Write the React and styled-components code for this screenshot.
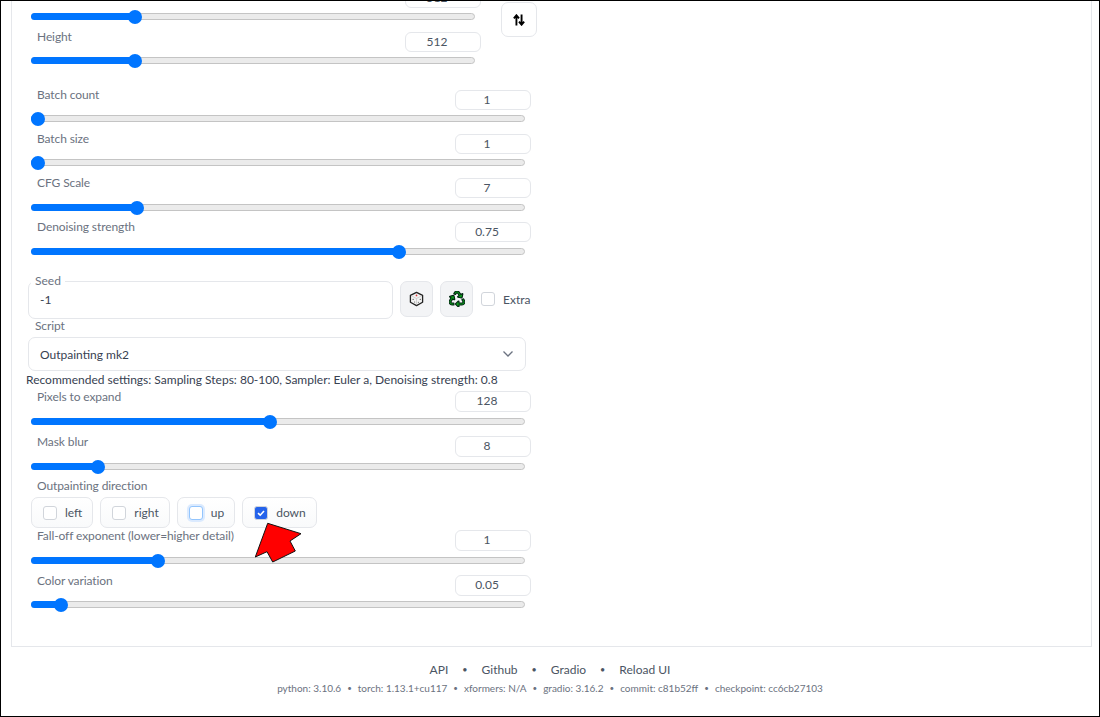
import React from 'react';
import styled, { createGlobalStyle } from 'styled-components';
import { FaRecycle } from 'react-icons/fa';

const GlobalStyle = createGlobalStyle`
  html, body {
    margin: 0;
    padding: 0;
    background: white;
  }
  body {
    font-family: Lato, "Noto Sans", "Liberation Sans", sans-serif;
  }
`;

const Frame = styled.div`
  box-sizing: border-box;
  width: 1100px;
  height: 717px;
  border: 1px solid black;
  overflow: hidden;
  position: relative;
  background: white;
`;

const Panel = styled.main`
  box-sizing: border-box;
  display: flow-root;
  height: 647px;
  margin: -1px 7px 0 10px;
  border: 1px solid #e5e7eb;
  border-top: 0;
  padding-left: 19px;
`;

const Column = styled.div`
  width: 494px;
`;

const SizeGroup = styled.div`
  display: flex;
  gap: 26px;
  margin-top: -12px;
`;

const SizeSliders = styled.div`
  width: 444px;
  flex: none;
`;

const SwapButton = styled.button`
  box-sizing: border-box;
  flex: none;
  width: 36px;
  height: 35px;
  margin-top: 14px;
  padding: 0;
  display: flex;
  align-items: center;
  justify-content: center;
  background: white;
  border: 1px solid #e5e7eb;
  border-radius: 7px;
`;

const SliderBlock = styled.div`
  margin-top: ${(p) => p.$top || 0}px;
`;

const SliderHead = styled.div`
  display: flex;
  justify-content: space-between;
  height: ${(p) => (p.$tall ? 21 : 20)}px;
`;

const SliderLabel = styled.span`
  font-size: 12px;
  letter-spacing: -0.1px;
  line-height: ${(p) => (p.$tall ? 12 : 10)}px;
  color: #6b7280;
  padding-left: 6px;
`;

const NumberBox = styled.div`
  box-sizing: border-box;
  width: 76px;
  height: 100%;
  margin-right: -6px;
  padding-right: 12px;
  border: 1px solid #e5e7eb;
  border-radius: 6px;
  font-size: 12px;
  line-height: 18px;
  text-align: center;
  color: #4b5563;
`;

const Track = styled.div`
  box-sizing: border-box;
  position: relative;
  height: 7px;
  margin-top: ${(p) => p.$gap}px;
  background: #ebebeb;
  border: 1px solid #c4c4c4;
  border-radius: 4px;
`;

const TrackFill = styled.div`
  position: absolute;
  left: -1px;
  top: -1px;
  bottom: -1px;
  background: #0075ff;
  border-radius: 4px;
`;

const Thumb = styled.div`
  position: absolute;
  top: -3.5px;
  right: -7px;
  width: 14px;
  height: 14px;
  border-radius: 50%;
  background: #0075ff;
`;

const SeedRow = styled.div`
  display: flex;
  align-items: flex-start;
  margin-top: 26px;
  margin-left: -3px;
`;

const SeedBox = styled.div`
  position: relative;
  box-sizing: border-box;
  flex: none;
  width: 365px;
  height: 38px;
  padding-left: 11px;
  border: 1px solid #e5e7eb;
  border-radius: 7px;
  font-size: 12px;
  line-height: 36px;
  color: #374151;
`;

const SeedLegend = styled.span`
  position: absolute;
  top: -8px;
  left: 2px;
  padding: 0 4px;
  background: white;
  font-size: 12px;
  line-height: 14px;
  color: #6b7280;
`;

const ToolButton = styled.button`
  box-sizing: border-box;
  flex: none;
  width: 33px;
  height: 36px;
  margin-left: 7px;
  padding: 0;
  display: flex;
  align-items: center;
  justify-content: center;
  background: #f3f4f6;
  border: 1px solid #e5e7eb;
  border-radius: 7px;
`;

const ExtraToggle = styled.label`
  display: flex;
  flex: none;
  align-items: center;
  gap: 8px;
  height: 36px;
  margin-left: 8px;
  font-size: 12px;
  color: #4b5563;
`;

const Box = styled.span`
  box-sizing: border-box;
  flex: none;
  width: 14px;
  height: 14px;
  display: flex;
  align-items: center;
  justify-content: center;
  border: 1px solid ${(p) => (p.$focused ? '#93c5fd' : '#d1d5db')};
  border-radius: 3px;
  background: ${(p) => (p.$checked ? '#2563eb' : 'white')};
  box-shadow: ${(p) => (p.$focused ? '0 0 0 2px #dbeafe' : 'none')};
`;

const FieldLabel = styled.div`
  margin-left: ${(p) => p.$left || 0}px;
  margin-top: ${(p) => p.$top || 0}px;
  font-size: 12px;
  letter-spacing: -0.1px;
  line-height: 14px;
  color: #6b7280;
`;

const SelectBox = styled.div`
  box-sizing: border-box;
  display: flex;
  align-items: center;
  justify-content: space-between;
  width: 498px;
  height: 34px;
  margin: 4px 0 0 -3px;
  padding: 0 11px 0 11px;
  border: 1px solid #e5e7eb;
  border-radius: 7px;
  font-size: 12px;
  color: #374151;
`;

const Hint = styled.div`
  margin: 1px 0 0 -5px;
  font-size: 12px;
  line-height: 16px;
  white-space: nowrap;
  color: #374151;
`;

const ChipRow = styled.div`
  display: flex;
  gap: 7px;
  margin-top: 4px;
`;

const Chip = styled.label`
  box-sizing: border-box;
  display: flex;
  align-items: center;
  gap: 8px;
  height: 31px;
  padding: 0 10px 0 11px;
  border: 1px solid #e5e7eb;
  border-radius: 7px;
  background: linear-gradient(to bottom, #ffffff, #f9fafb);
  font-size: 12px;
  color: #4b5563;
`;

const Arrow = styled.svg`
  position: absolute;
  left: 250px;
  top: 517px;
`;

const Footer = styled.footer`
  text-align: center;
  padding-top: 15px;
`;

const FooterLinks = styled.div`
  display: flex;
  justify-content: center;
  align-items: center;
  gap: 14px;
  font-size: 12px;
  line-height: 16px;
  color: #4b5563;
`;

const FooterMeta = styled.div`
  display: flex;
  justify-content: center;
  align-items: center;
  gap: 6px;
  margin-top: 3px;
  font-size: 10px;
  line-height: 14px;
  color: #6b7280;
`;

const Dot = styled.span`
  font-size: ${(p) => p.$size}px;
`;

function Slider({ label, value, percent, top, gap = 5, tall }) {
  return (
    <SliderBlock $top={top}>
      <SliderHead $tall={tall}>
        <SliderLabel $tall={tall}>{label}</SliderLabel>
        <NumberBox>{value}</NumberBox>
      </SliderHead>
      <Track $gap={gap}>
        <TrackFill style={{ width: `${percent}%` }}>
          <Thumb />
        </TrackFill>
      </Track>
    </SliderBlock>
  );
}

function Check({ checked, focused }) {
  return (
    <Box $checked={checked} $focused={focused}>
      {checked && (
        <svg width="10" height="10" viewBox="0 0 10 10">
          <path d="M2 5.2 L4.2 7.2 L8 3" fill="none" stroke="white" strokeWidth="1.6" />
        </svg>
      )}
    </Box>
  );
}

function SwapIcon() {
  return (
    <svg width="12" height="12" viewBox="0 0 14 14">
      <path d="M4 13.5 V2 M1 5 L4 1.5 L7 5 M10 0.5 V12 M7 9 L10 12.5 L13 9" fill="none" stroke="#000" strokeWidth="2.2" />
    </svg>
  );
}

function DiceIcon() {
  return (
    <svg width="15" height="16" viewBox="0 0 16 16">
      <path d="M8 1 L14.5 4.2 V11.5 L8 15 L1.5 11.5 V4.2 Z" fill="#f2f2f2" stroke="#222" strokeWidth="1.4" strokeLinejoin="round" />
      <path d="M2.5 4.6 L8 7.5 L13.5 4.6 M8 7.5 V14.5" fill="none" stroke="#bbb" strokeWidth="0.6" />
      <circle cx="8" cy="4.2" r="0.9" fill="#d33" />
      <circle cx="4.4" cy="8.4" r="0.6" fill="#555" />
      <circle cx="6" cy="11.2" r="0.6" fill="#555" />
      <circle cx="10" cy="11.4" r="0.6" fill="#555" />
      <circle cx="12" cy="8.4" r="0.6" fill="#555" />
    </svg>
  );
}

export default function App() {
  return (
    <Frame>
      <GlobalStyle />
      <Panel>
        <Column>
          <SizeGroup>
            <SizeSliders>
              <Slider label="Width" value="512" percent={23.5} />
              <Slider label="Height" value="512" percent={23.5} top={12} />
            </SizeSliders>
            <SwapButton><SwapIcon /></SwapButton>
          </SizeGroup>
          <Slider label="Batch count" value="1" percent={1.4} top={26} />
          <Slider label="Batch size" value="1" percent={1.4} top={12} />
          <Slider label="CFG Scale" value="7" percent={21.5} top={12} gap={6} />
          <Slider label="Denoising strength" value="0.75" percent={74.8} top={11} gap={6} />
          <SeedRow>
            <SeedBox>
              <SeedLegend>Seed</SeedLegend>
              -1
            </SeedBox>
            <ToolButton><DiceIcon /></ToolButton>
            <ToolButton>
              <FaRecycle size={16} color="#0a9a1a" stroke="#021" strokeWidth={34} />
            </ToolButton>
            <ExtraToggle><Check />Extra</ExtraToggle>
          </SeedRow>
          <FieldLabel $left={4}>Script</FieldLabel>
          <SelectBox>
            Outpainting mk2
            <svg width="12" height="8" viewBox="0 0 12 8">
              <path d="M1.5 1.5 L6 6 L10.5 1.5" fill="none" stroke="#6b7280" strokeWidth="1.3" />
            </svg>
          </SelectBox>
          <Hint>Recommended settings: Sampling Steps: 80-100, Sampler: Euler a, Denoising strength: 0.8</Hint>
          <Slider label="Pixels to expand" value="128" percent={48.6} top={3} gap={6} tall />
          <Slider label="Mask blur" value="8" percent={13.6} top={11} gap={6} tall />
          <FieldLabel $left={6} $top={9}>Outpainting direction</FieldLabel>
          <ChipRow>
            <Chip><Check />left</Chip>
            <Chip><Check />right</Chip>
            <Chip><Check focused />up</Chip>
            <Chip><Check checked />down</Chip>
          </ChipRow>
          <Slider label="Fall-off exponent (lower=higher detail)" value="1" percent={25.8} top={2} gap={6} tall />
          <Slider label="Color variation" value="0.05" percent={6.1} top={11} tall />
        </Column>
      </Panel>
      <Footer>
        <FooterLinks>
          <span>API</span><Dot $size={9}>•</Dot>
          <span>Github</span><Dot $size={9}>•</Dot>
          <span>Gradio</span><Dot $size={9}>•</Dot>
          <span>Reload UI</span>
        </FooterLinks>
        <FooterMeta>
          <span>python: 3.10.6</span><Dot $size={8}>•</Dot>
          <span>torch: 1.13.1+cu117</span><Dot $size={8}>•</Dot>
          <span>xformers: N/A</span><Dot $size={8}>•</Dot>
          <span>gradio: 3.16.2</span><Dot $size={8}>•</Dot>
          <span>commit: c81b52ff</span><Dot $size={8}>•</Dot>
          <span>checkpoint: cc6cb27103</span>
        </FooterMeta>
      </Footer>
      <Arrow width="60" height="50" viewBox="0 0 60 50">
        <path d="M16.7 5.3 L50 15.7 L39 23 L44.3 33 L21.7 44 L16 33.7 L4.3 39 Z" fill="#ff0000" stroke="#111" strokeWidth="1" />
      </Arrow>
    </Frame>
  );
}
